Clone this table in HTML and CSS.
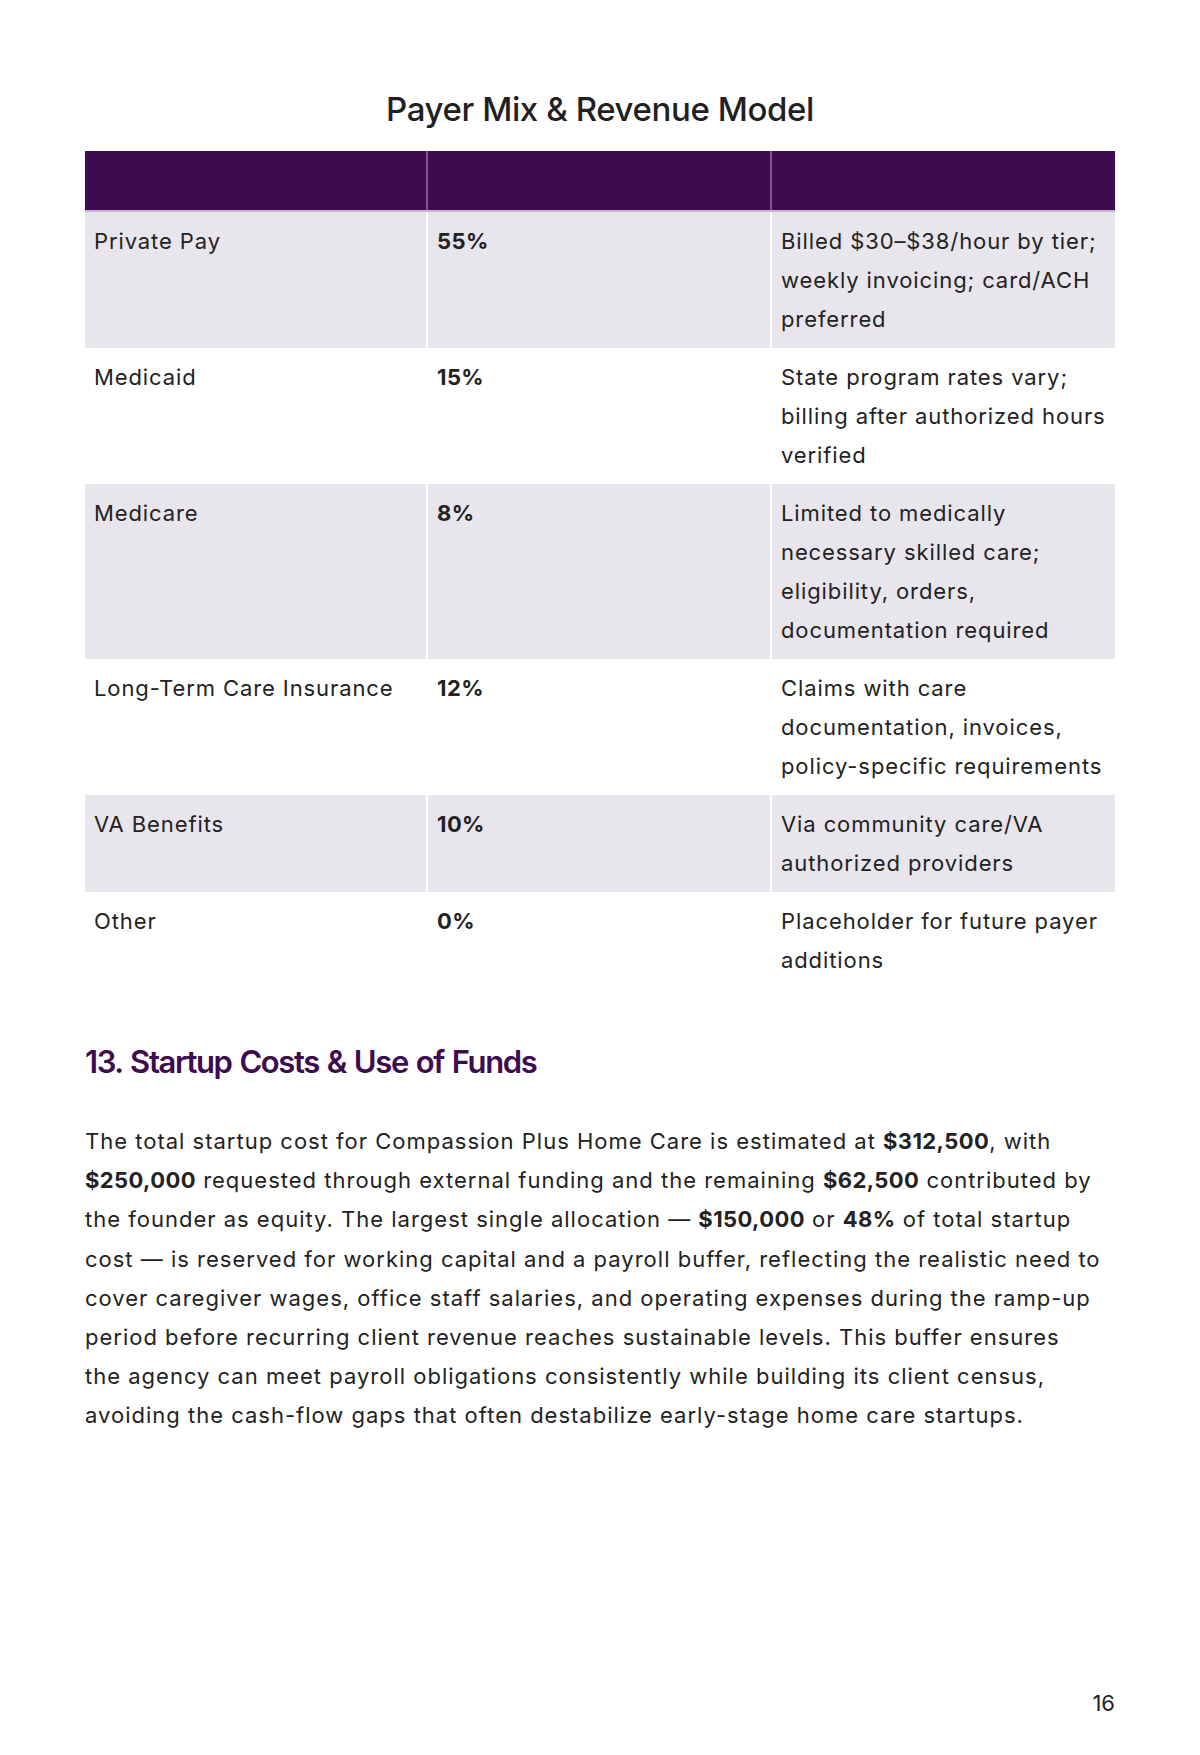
FILE: index.html
```html
<!DOCTYPE html>
<html lang="en">
<head>
<meta charset="utf-8">
<title>Payer Mix &amp; Revenue Model</title>
<link rel="stylesheet" href="styles.css">
</head>
<body>
<div class="page">
  <h2 class="table-title">Payer Mix &amp; Revenue Model</h2>
  <table class="payer-table">
    <colgroup><col class="c1"><col class="c2"><col class="c3"></colgroup>
    <thead>
      <tr><th></th><th></th><th></th></tr>
    </thead>
    <tbody>
      <tr class="shade"><td>Private Pay</td><td class="pct">55%</td><td>Billed $30–$38/hour by tier; weekly invoicing; card/ACH preferred</td></tr>
      <tr><td>Medicaid</td><td class="pct">15%</td><td>State program rates vary; billing after authorized hours verified</td></tr>
      <tr class="shade"><td>Medicare</td><td class="pct">8%</td><td>Limited to medically necessary skilled care; eligibility, orders, documentation required</td></tr>
      <tr><td>Long-Term Care Insurance</td><td class="pct">12%</td><td>Claims with care documentation, invoices, policy-specific requirements</td></tr>
      <tr class="shade"><td>VA Benefits</td><td class="pct">10%</td><td>Via community care/VA authorized providers</td></tr>
      <tr><td>Other</td><td class="pct">0%</td><td>Placeholder for future payer additions</td></tr>
    </tbody>
  </table>

  <h3 class="section-heading">13. Startup Costs &amp; Use of Funds</h3>
  <p class="body-text">The total startup cost for Compassion Plus Home Care is estimated at <strong>$312,500</strong>, with <strong>$250,000</strong> requested through external funding and the remaining <strong>$62,500</strong> contributed by the founder as equity. The largest single allocation — <strong>$150,000</strong> or <strong>48%</strong> of total startup cost — is reserved for working capital and a payroll buffer, reflecting the realistic need to cover caregiver wages, office staff salaries, and operating expenses during the ramp-up period before recurring client revenue reaches sustainable levels. This buffer ensures the agency can meet payroll obligations consistently while building its client census, avoiding the cash-flow gaps that often destabilize early-stage home care startups.</p>

  <div class="page-number">16</div>
</div>
</body>
</html>
```

FILE: styles.css
```css
html, body {
  margin: 0;
  padding: 0;
  background: #ffffff;
}

.page {
  box-sizing: border-box;
  width: 1200px;
  min-height: 1755px;
  padding: 0 85px 40px 85px;
  display: flex;
  flex-direction: column;
  font-family: "Inter", "Noto Sans", sans-serif;
  color: #222222;
}

.table-title {
  margin: 89px 0 0 0;
  font-size: 33px;
  line-height: 40px;
  font-weight: 500;
  letter-spacing: -0.4px;
  text-align: center;
  color: #1f1f24;
}

.payer-table {
  margin-top: 22px;
  width: 1030px;
  border-collapse: collapse;
  table-layout: fixed;
  font-size: 22px;
  line-height: 39px;
  letter-spacing: 0.9px;
}

.payer-table col.c1 { width: 342px; }
.payer-table col.c2 { width: 344px; }
.payer-table col.c3 { width: 344px; }

.payer-table th {
  background: #3e0b50;
  height: 59px;
  padding: 0;
  border-left: 2px solid #7d5a8c;
  border-bottom: 2px solid #c7b5cf;
}

.payer-table th:first-child { border-left: none; }

.payer-table td {
  vertical-align: top;
  padding: 10px 4px 9px 9px;
  border-left: 2px solid #ffffff;
  color: #222222;
}

.payer-table td:first-child { border-left: none; }

.payer-table tr.shade td {
  background: #e9e5ec;
}

.payer-table td.pct {
  font-weight: 700;
  letter-spacing: 0.4px;
}

.section-heading {
  margin: 53px 0 0 0;
  font-size: 31px;
  line-height: 40px;
  font-weight: 600;
  letter-spacing: -1.4px;
  word-spacing: 1.5px;
  color: #3e0b50;
}

.body-text {
  margin: 40px 0 0 0;
  max-width: 1017px;
  font-size: 22px;
  line-height: 39.2px;
  letter-spacing: 1px;
  color: #222222;
}

.body-text strong {
  font-weight: 700;
  letter-spacing: 0.4px;
}

.page-number {
  margin-top: auto;
  align-self: flex-end;
  font-size: 22px;
  line-height: 24px;
  color: #222222;
}
```
